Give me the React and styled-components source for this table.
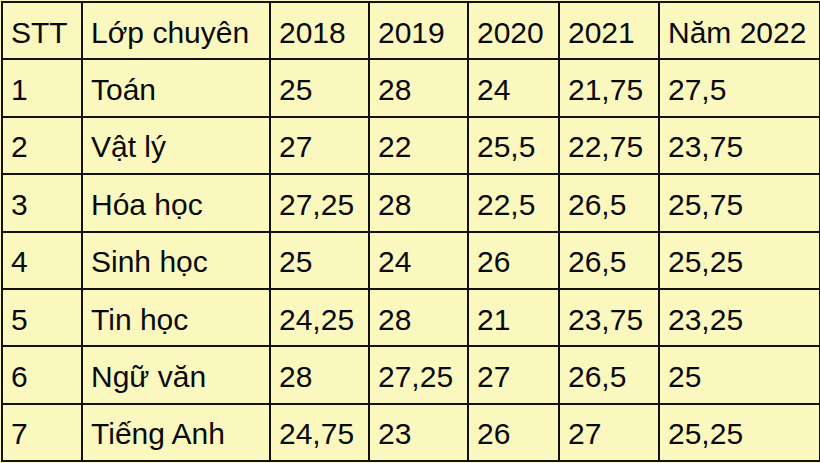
import React from "react";
import styled, { createGlobalStyle } from "styled-components";

const GlobalStyle = createGlobalStyle`
  html, body {
    margin: 0;
    padding: 0;
    background: #faf8bf;
  }
`;

const Table = styled.table`
  width: 818px;
  height: 461px;
  margin: 1px;
  table-layout: fixed;
  border-collapse: collapse;
  background: #faf8bf;
  font-family: "Liberation Sans", Arial, sans-serif;
  font-size: 30px;
  color: #0a0a0a;
`;

const Cell = styled.td`
  border: 2px solid #111;
  padding: 4px 0 0 8px;
  white-space: nowrap;
  overflow: hidden;
  text-align: left;
  vertical-align: middle;
  font-weight: normal;
`;

const widths = [80, 188, 99, 99, 91, 100, 161];

const header = ["STT", "Lớp chuyên", "2018", "2019", "2020", "2021", "Năm 2022"];

const rows = [
  ["1", "Toán", "25", "28", "24", "21,75", "27,5"],
  ["2", "Vật lý", "27", "22", "25,5", "22,75", "23,75"],
  ["3", "Hóa học", "27,25", "28", "22,5", "26,5", "25,75"],
  ["4", "Sinh học", "25", "24", "26", "26,5", "25,25"],
  ["5", "Tin học", "24,25", "28", "21", "23,75", "23,25"],
  ["6", "Ngữ văn", "28", "27,25", "27", "26,5", "25"],
  ["7", "Tiếng Anh", "24,75", "23", "26", "27", "25,25"],
];

const App = () => {
  return (
    <>
      <GlobalStyle />
      <Table>
        <colgroup>
          {widths.map((w, i) => (
            <col key={i} style={{ width: w }} />
          ))}
        </colgroup>
        <tbody>
          <tr>
            {header.map((h, i) => (
              <Cell as="th" key={i}>{h}</Cell>
            ))}
          </tr>
          {rows.map((r, i) => (
            <tr key={i}>
              {r.map((c, j) => (
                <Cell key={j}>{c}</Cell>
              ))}
            </tr>
          ))}
        </tbody>
      </Table>
    </>
  );
};

export default App;
